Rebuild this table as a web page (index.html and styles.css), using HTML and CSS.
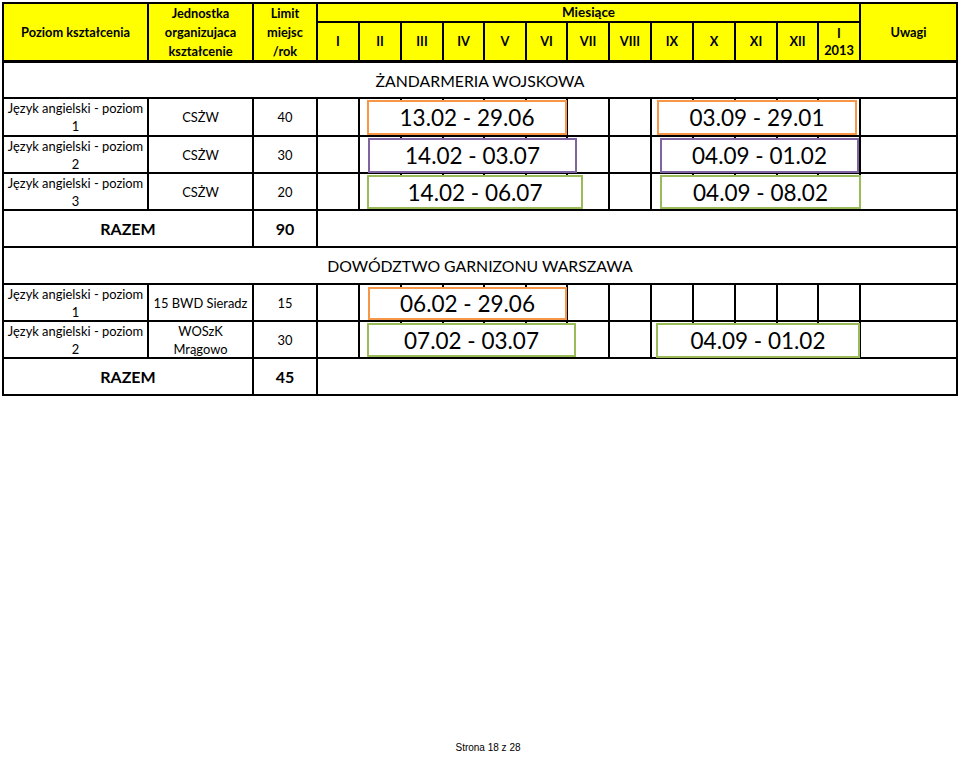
FILE: index.html
```html
<!DOCTYPE html>
<html lang="pl">
<head>
<meta charset="utf-8">
<title>Harmonogram</title>
<link rel="stylesheet" href="styles.css">
</head>
<body>
<div class="page">
  <div class="sheet">
    <div class="c h rs2">Poziom kształcenia</div>
    <div class="c h rs2 h3">Jednostka<br>organizujaca<br>kształcenie</div>
    <div class="c h rs2 h3">Limit<br>miejsc<br>/rok</div>
    <div class="c h cs13">Miesiące</div>
    <div class="c h rs2 uw">Uwagi</div>
    <div class="c h m">I</div>
    <div class="c h m">II</div>
    <div class="c h m">III</div>
    <div class="c h m">IV</div>
    <div class="c h m">V</div>
    <div class="c h m">VI</div>
    <div class="c h m">VII</div>
    <div class="c h m">VIII</div>
    <div class="c h m">IX</div>
    <div class="c h m">X</div>
    <div class="c h m">XI</div>
    <div class="c h m">XII</div>
    <div class="c h m two">I<br>2013</div>

    <div class="c sec cs17">ŻANDARMERIA WOJSKOWA</div>

    <div class="c t">Język angielski - poziom<br>1</div>
    <div class="c t">CSŻW</div>
    <div class="c t">40</div>
    <div class="c"></div><div class="c"></div><div class="c"></div><div class="c"></div><div class="c"></div><div class="c"></div><div class="c"></div><div class="c"></div><div class="c"></div><div class="c"></div><div class="c"></div><div class="c"></div><div class="c"></div>
    <div class="c"></div>

    <div class="c t">Język angielski - poziom<br>2</div>
    <div class="c t">CSŻW</div>
    <div class="c t">30</div>
    <div class="c"></div><div class="c"></div><div class="c"></div><div class="c"></div><div class="c"></div><div class="c"></div><div class="c"></div><div class="c"></div><div class="c"></div><div class="c"></div><div class="c"></div><div class="c"></div><div class="c"></div>
    <div class="c"></div>

    <div class="c t">Język angielski - poziom<br>3</div>
    <div class="c t">CSŻW</div>
    <div class="c t">20</div>
    <div class="c"></div><div class="c"></div><div class="c"></div><div class="c"></div><div class="c"></div><div class="c"></div><div class="c"></div><div class="c"></div><div class="c"></div><div class="c"></div><div class="c"></div><div class="c"></div><div class="c"></div>
    <div class="c"></div>

    <div class="c tot cs2">RAZEM</div>
    <div class="c tot">90</div>
    <div class="c cs14"></div>

    <div class="c sec cs17">DOWÓDZTWO GARNIZONU WARSZAWA</div>

    <div class="c t">Język angielski - poziom<br>1</div>
    <div class="c t">15 BWD Sieradz</div>
    <div class="c t">15</div>
    <div class="c"></div><div class="c"></div><div class="c"></div><div class="c"></div><div class="c"></div><div class="c"></div><div class="c"></div><div class="c"></div><div class="c"></div><div class="c"></div><div class="c"></div><div class="c"></div><div class="c"></div>
    <div class="c"></div>

    <div class="c t">Język angielski - poziom<br>2</div>
    <div class="c t">WOSzK<br>Mrągowo</div>
    <div class="c t">30</div>
    <div class="c"></div><div class="c"></div><div class="c"></div><div class="c"></div><div class="c"></div><div class="c"></div><div class="c"></div><div class="c"></div><div class="c"></div><div class="c"></div><div class="c"></div><div class="c"></div><div class="c"></div>
    <div class="c"></div>

    <div class="c tot cs2">RAZEM</div>
    <div class="c tot">45</div>
    <div class="c cs14"></div>

    <div class="box orange b1">13.02 - 29.06</div>
    <div class="box orange b2">03.09 - 29.01</div>
    <div class="box purple b3">14.02 - 03.07</div>
    <div class="box purple b4">04.09 - 01.02</div>
    <div class="box green b5">14.02 - 06.07</div>
    <div class="box green b6">04.09 - 08.02</div>
    <div class="box orange b7">06.02 - 29.06</div>
    <div class="box green b8">07.02 - 03.07</div>
    <div class="box green b9">04.09 - 01.02</div>
  </div>
  <div class="footer">Strona 18 z 28</div>
</div>
</body>
</html>
```

FILE: styles.css
```css
* { box-sizing: border-box; }
html, body { margin: 0; padding: 0; background: #fff; }
body { font-family: "Lato", "DejaVu Sans", sans-serif; color: #000; }

.page { width: 960px; height: 757px; padding: 2px 0 0 2px; overflow: hidden; }

.sheet {
  position: relative;
  width: 956px;
  display: grid;
  grid-template-columns: 145px 105px 64px 42px 42px 42px 41px 42px 41px 42px 42px 42px 42px 42px 41px 42px 97px;
  grid-template-rows: 19px 40px 36px 38px 37px 37px 37px 37px 37px 37px 37px;
  border-top: 2px solid #000;
  border-left: 2px solid #000;
}

.c {
  border-right: 2px solid #000;
  border-bottom: 2px solid #000;
  display: flex;
  align-items: center;
  justify-content: center;
  text-align: center;
  background: #fff;
  white-space: nowrap;
}

.h {
  background: #ffff00;
  font-weight: 700;
  font-size: 12.8px;
  line-height: 19px;
}
.m { font-size: 12.8px; border-bottom-width: 3px; }
.rs2 { border-bottom-width: 3px; }
.two { line-height: 17px; }

.rs2 { grid-row: span 2; }
.cs2 { grid-column: span 2; }
.cs13 { grid-column: span 13; font-size: 13.5px; }
.cs14 { grid-column: span 14; }
.cs17 { grid-column: span 17; }

.sec { font-size: 15.8px; }

.t { font-size: 12.9px; line-height: 18px; }

.tot { font-weight: 700; font-size: 16px; }

.box {
  position: absolute;
  display: flex;
  align-items: center;
  justify-content: center;
  background: #fff;
  border: 2px solid #000;
  font-size: 22.5px;
}
.orange { border-color: #f79646; }
.purple { border-color: #8064a2; }
.green { border-color: #9bbb59; }

.b1 { left: 363px; top: 96px; width: 200px; height: 35px; }
.b2 { left: 653px; top: 96px; width: 200px; height: 35px; }
.b3 { left: 364px; top: 134px; width: 209px; height: 35px; }
.b4 { left: 656px; top: 134px; width: 199px; height: 35px; }
.b5 { left: 363px; top: 171px; width: 216px; height: 34px; }
.b6 { left: 656px; top: 171px; width: 201px; height: 34px; }
.b7 { left: 364px; top: 283px; width: 199px; height: 33px; }
.b8 { left: 363px; top: 319px; width: 209px; height: 34px; }
.b9 { left: 652px; top: 319px; width: 204px; height: 35px; }

.footer {
  margin-top: 346px;
  padding-left: 14px;
  text-align: center;
  font-family: "Liberation Sans", Arial, sans-serif;
  font-size: 10px;
  line-height: 12px;
}
```
